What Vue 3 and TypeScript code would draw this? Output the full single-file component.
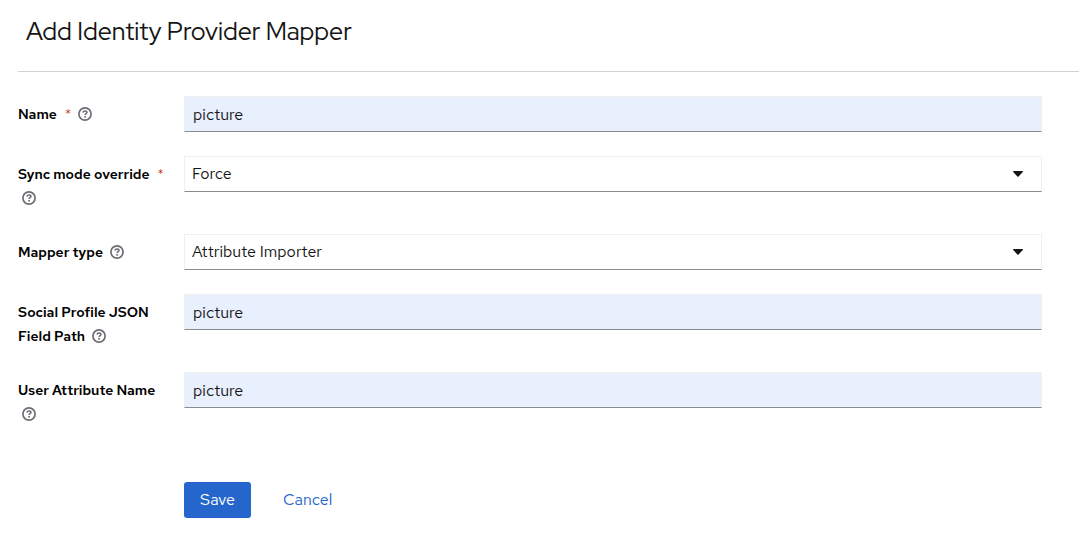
<script setup lang="ts">
import { reactive } from 'vue'

interface Field {
  id: string
  label: string
  kind: 'text' | 'select'
  required: boolean
  options: string[]
}

const fields: Field[] = [
  { id: 'name', label: 'Name', kind: 'text', required: true, options: [] },
  { id: 'sync-mode', label: 'Sync mode override', kind: 'select', required: true, options: ['Force'] },
  { id: 'mapper-type', label: 'Mapper type', kind: 'select', required: false, options: ['Attribute Importer'] },
  { id: 'json-field', label: 'Social Profile JSON Field Path', kind: 'text', required: false, options: [] },
  { id: 'user-attribute', label: 'User Attribute Name', kind: 'text', required: false, options: [] },
]

const values = reactive<Record<string, string>>({
  name: 'picture',
  'sync-mode': 'Force',
  'mapper-type': 'Attribute Importer',
  'json-field': 'picture',
  'user-attribute': 'picture',
})
</script>

<template>
  <main class="page">
    <header class="heading">
      <h1>Add Identity Provider Mapper</h1>
    </header>
    <form class="form" @submit.prevent>
      <div v-for="field in fields" :key="field.id" class="row">
        <div class="label-cell">
          <label :for="field.id">{{ field.label }}<span v-if="field.required" class="required" aria-hidden="true">*</span></label>
          {{ ' ' }}
          <button class="help" type="button" :aria-label="`Help for ${field.label}`">
            <svg viewBox="0 0 14 14" aria-hidden="true">
              <circle cx="7" cy="7" r="6.100" fill="none" stroke="currentColor" stroke-width="1.700" />
              <path d="M5 5.500C5.200 4.500 6 4 7 4c1.200 0 1.900.6 1.900 1.500 0 1.200-1.800 1.200-1.800 2.500" fill="none" stroke="currentColor" stroke-width="1.600" />
              <rect x="6.100" y="8.900" width="1.900" height="1.800" rx="0.700" fill="currentColor" />
            </svg>
          </button>
        </div>
        <input v-if="field.kind === 'text'" :id="field.id" v-model="values[field.id]" class="control filled" type="text" :required="field.required" />
        <div v-else class="select-wrap">
          <select :id="field.id" v-model="values[field.id]" class="control">
            <option v-for="option in field.options" :key="option">{{ option }}</option>
          </select>
          <svg class="caret" viewBox="0 0 10 6" aria-hidden="true">
            <path d="M.7 0h8.600c.6 0 .9.7.5 1.100L5.600 5.400a.85.85 0 0 1-1.200 0L.2 1.100C-.2.7.1 0 .7 0z" fill="currentColor" />
          </svg>
        </div>
      </div>
      <div class="actions">
        <button class="save" type="submit">Save</button>
        <button class="cancel" type="button">Cancel</button>
      </div>
    </form>
  </main>
</template>

<style>
body {
  margin: 0;
  background: #fff;
}
</style>

<style scoped>
.page {
  padding-left: 18px;
  color: #151515;
  font-family: "Red Hat Text", Inter, "Liberation Sans", sans-serif;
  font-size: 16px;
  line-height: 24px;
}

.heading {
  padding: 16px 8px 23px;
  border-bottom: 1px solid #d2d2d2;
}

h1 {
  margin: 0;
  font-family: "Red Hat Display", "Red Hat Text", Inter, sans-serif;
  font-size: 25px;
  font-weight: 400;
  line-height: 32px;
}

.form {
  display: grid;
  gap: 24px;
  padding: 24px 37px 35px 0;
}

.row {
  display: grid;
  grid-template-columns: 150px minmax(0, 1fr);
  column-gap: 16px;
  align-items: start;
}

.label-cell {
  padding-top: 6px;
  font-size: 14px;
}

label {
  color: #000;
  font-weight: 600;
}

.required {
  margin-left: 8px;
  color: #c9190b;
  font-weight: 300;
}

button {
  border: 0;
  background: none;
  font: inherit;
  cursor: pointer;
}

.help {
  padding: 0 4px;
  color: #6a6e73;
  line-height: 14px;
  vertical-align: -2px;
}

.help svg {
  display: block;
  width: 14px;
  height: 14px;
}

.control {
  box-sizing: border-box;
  width: 100%;
  height: 36px;
  margin: 0;
  padding: 0 8px;
  border: 1px solid #f0f0f0;
  border-bottom-color: #8a8d90;
  border-radius: 0;
  background: #fff;
  color: #151515;
  font: inherit;
  outline: 0;
}

.filled {
  background: #e8f0fe;
}

select.control {
  display: block;
  padding: 0 40px 0 7px;
  appearance: none;
}

.select-wrap {
  display: grid;
  align-items: center;
}

.select-wrap > * {
  grid-area: 1 / 1;
}

.caret {
  justify-self: end;
  width: 10px;
  height: 6px;
  margin-right: 19px;
  pointer-events: none;
}

.actions {
  display: flex;
  gap: 16px;
  margin-top: 32px;
  padding-left: 166px;
}

.save,
.cancel {
  height: 36px;
  padding: 0 16px;
  border-radius: 3px;
  color: #2566cc;
}

.save {
  background: #2566cc;
  color: #fff;
}
</style>
